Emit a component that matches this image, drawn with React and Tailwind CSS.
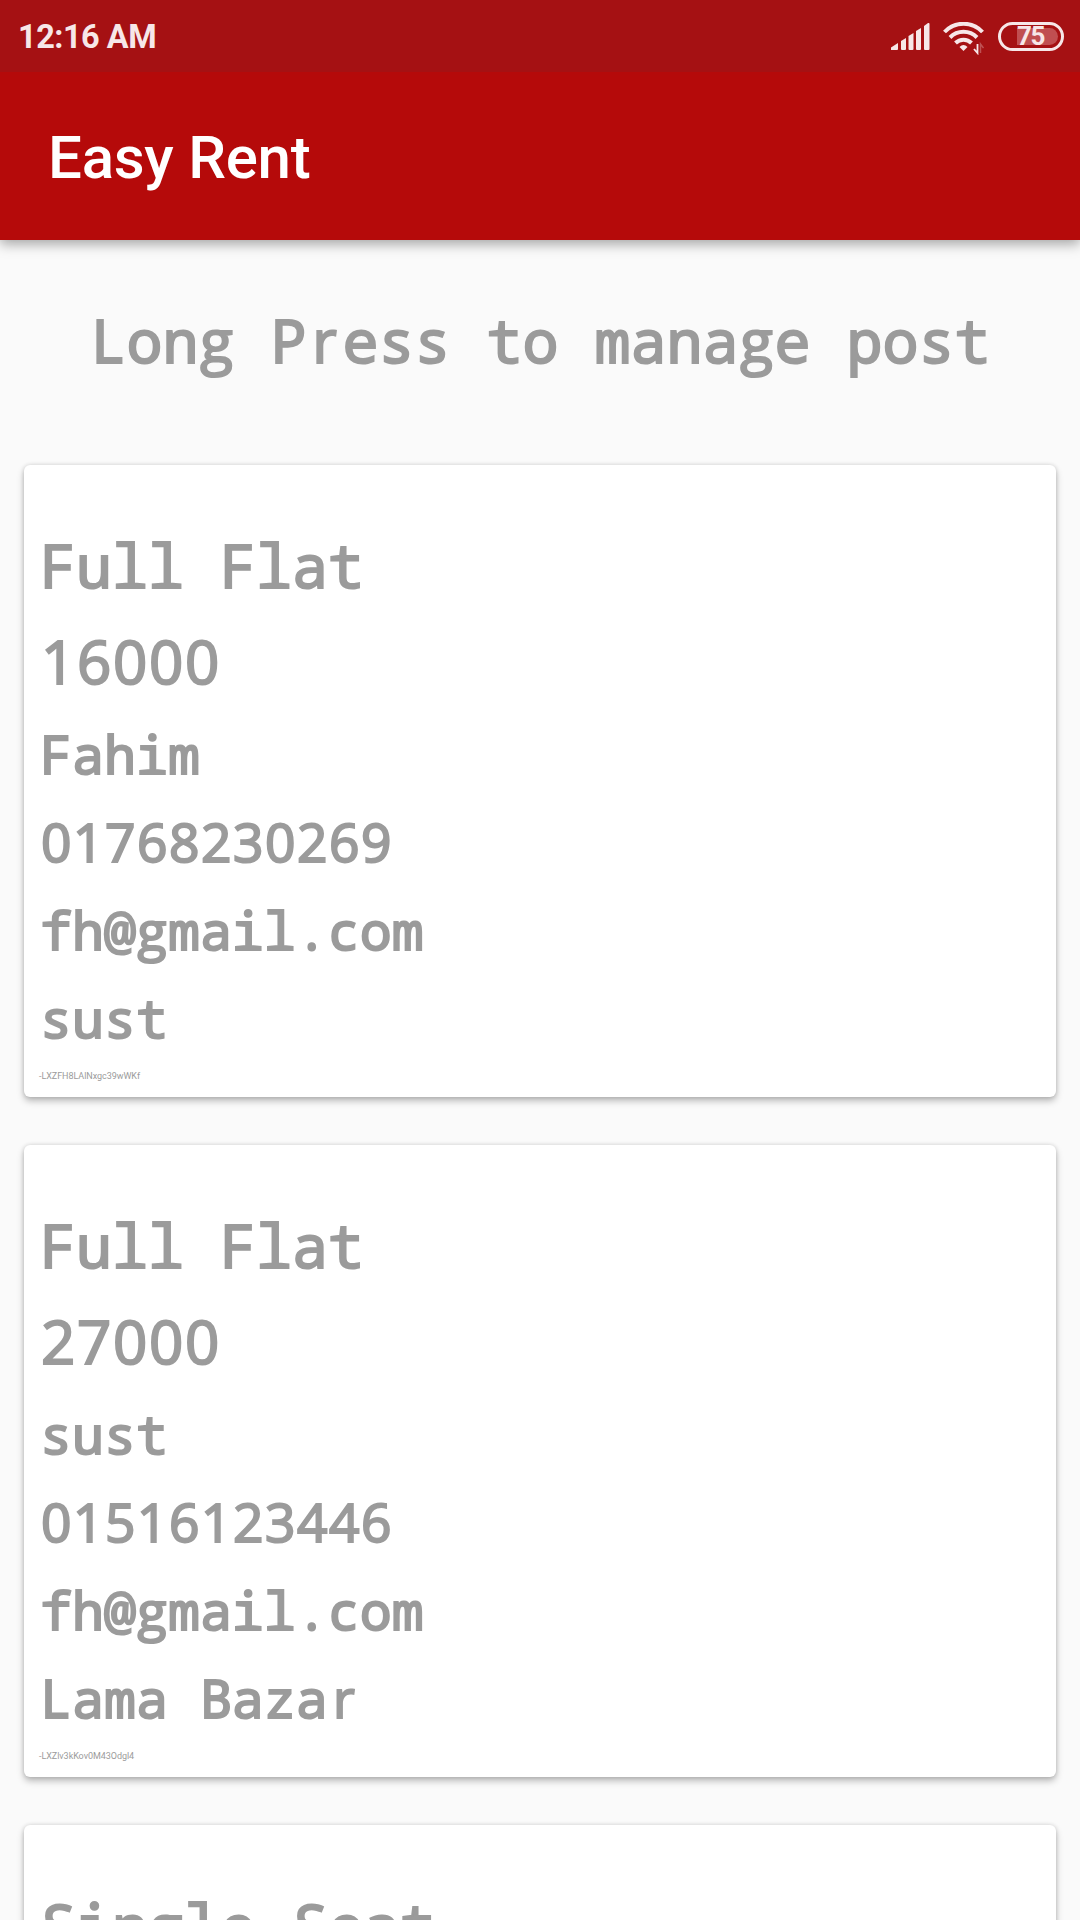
const posts = [
  { type: 'Full Flat', rent: '16000', name: 'Fahim', phone: '01768230269', email: 'fh@gmail.com', area: 'sust', id: '-LXZFH8LAlNxgc39wWKf' },
  { type: 'Full Flat', rent: '27000', name: 'sust', phone: '01516123446', email: 'fh@gmail.com', area: 'Lama Bazar', id: '-LXZlv3kKov0M43Odgl4' },
  { type: 'Single Seat', rent: '', name: '', phone: '', email: '', area: '', id: '' },
];

/* Monospaced words: g and r take the humanist shapes, each in a cell of 0.6em. */
function Mono({ text }) {
  return (
    <span className="font-['Noto_Sans_Mono','DejaVu_Sans_Mono',monospace] whitespace-pre">
      {text.split(/([gr])/).filter(Boolean).map((part, i) =>
        part === 'g' || part === 'r' ? (
          <span key={i} className="inline-block w-[0.6em] text-center font-['Open_Sans',sans-serif]">{part}</span>
        ) : (
          part
        )
      )}
    </span>
  );
}

function Digits({ text }) {
  return <span className="pl-px font-['Open_Sans',sans-serif] tracking-[0.0285em]">{text}</span>;
}

function StatusBar() {
  return (
    <div className="flex h-[72px] items-center bg-[#a51113] pr-4 pl-[18px] text-[#f7e7e8]">
      <span className="flex-1 pt-0.5 text-[32.5px] leading-[72px] font-bold tracking-[-0.5px]">12:16 AM</span>
      <svg className="mr-[12px] h-[29px] w-[41px]" viewBox="0 0 41 29" fill="currentColor">
        <path d="M1 28v-2.500l7-4.500v6q0 1-1 1z" />
        <path d="M11 19l5-3v11q0 1-1 1h-3q-1 0-1-1z" />
        <path d="M18.500 14l5-3v16q0 1-1 1h-3q-1 0-1-1z" />
        <path d="M26 9l5-3v21q0 1-1 1h-3q-1 0-1-1z" />
        <path d="M34 4l4-3q1.500-0.500 1.500 1v25q0 1-1 1h-3.500q-1 0-1-1z" />
      </svg>
      <svg className="mr-[14px] h-[33px] w-[41px] translate-y-[2px]" viewBox="0 0 41 33" fill="none" stroke="currentColor" strokeWidth="4">
        <path d="M1.500 10a26 26 0 0 1 38 0" />
        <path d="M7 15.500a19 19 0 0 1 27 0" />
        <path d="M12.500 21a11.500 11.500 0 0 1 16 0" />
        <path d="M16.500 25q4-4 8 0l-4 4z" fill="currentColor" stroke="none" />
        <path d="M34.500 22v9l-3.500-4" strokeWidth="1.800" />
        <path d="M37.500 31v-9l3 4" strokeWidth="1.500" opacity="0.300" />
      </svg>
      <div className="flex h-[29px] w-[66px] items-center rounded-full border-[3px] border-current pl-4">
        <div className="flex h-[17px] w-[41px] items-center rounded-l-xs rounded-r-full bg-[#c04f51] text-[26px] leading-none font-bold tracking-[-1.5px]">75</div>
      </div>
    </div>
  );
}

function PostCard({ post }) {
  return (
    <div className="h-[632px] shrink-0 rounded-[6px] bg-white pt-[52px] pl-[15px] shadow-[0_4px_7px_rgba(0,0,0,0.26),0_0_4px_rgba(0,0,0,0.14)]">
      <div className="pl-px text-[60px] leading-[96px]">
        <div className="h-24"><Mono text={post.type} /></div>
        <div className="h-[97px]"><Digits text={post.rent} /></div>
      </div>
      <div className="pl-px text-[53.3px] leading-[88px]">
        <div className="h-[88px]"><Mono text={post.name} /></div>
        <div className="h-[88px]"><Digits text={post.phone} /></div>
        <div className="h-[88px]"><Mono text={post.email} /></div>
        <div className="h-[88px]"><Mono text={post.area} /></div>
      </div>
      <div className="pt-1 text-[9px] leading-5 tracking-[-0.05px] [-webkit-text-stroke:0px]">{post.id}</div>
    </div>
  );
}

export default function App() {
  return (
    <div className="flex h-[1920px] w-[1080px] flex-col overflow-hidden bg-[#fafafa] font-['Roboto',sans-serif]">
      <div className="relative shadow-[0_4px_12px_rgba(0,0,0,0.35)]">
        <StatusBar />
        <div className="flex h-[168px] items-center bg-[#b50a0a] pt-1 pl-12 text-[60px] font-medium tracking-[-0.25px] text-white">Easy Rent</div>
      </div>
      <div className="flex min-h-0 flex-1 flex-col text-[#9b9b9b] [-webkit-text-stroke:2px_#9b9b9b]">
        <div className="h-[225px] shrink-0 pt-[52px] pl-px text-center text-[60px] leading-[96px]">
          <Mono text="Long Press to manage post" />
        </div>
        <div className="flex flex-col gap-12 px-6">
          {posts.map((post, i) => (
            <PostCard key={i} post={post} />
          ))}
        </div>
      </div>
    </div>
  );
}
